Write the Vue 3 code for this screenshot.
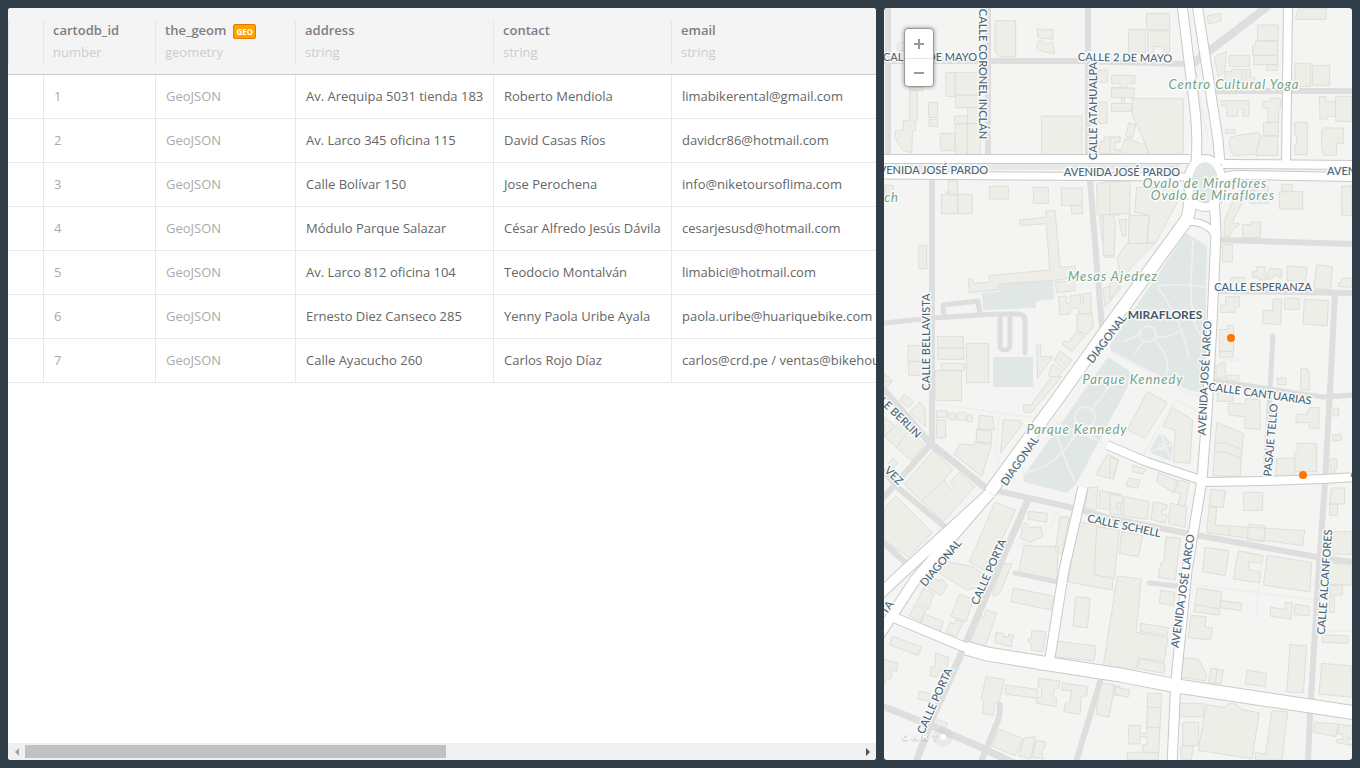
<template>
  <div class="workspace">
    <section class="panel table-panel">
      <div class="table-scroll">
        <table>
          <colgroup>
            <col class="col-handle">
            <col class="col-id">
            <col class="col-geom">
            <col class="col-address">
            <col class="col-contact">
            <col>
          </colgroup>
          <thead>
            <tr>
              <th><div class="head"></div></th>
              <th v-for="column in columns" :key="column.name">
                <div class="head">
                  <div class="name">
                    {{ column.name }}
                    <span v-if="column.geo" class="geo">GEO</span>
                  </div>
                  <div class="type">{{ column.type }}</div>
                </div>
              </th>
            </tr>
          </thead>
          <tbody>
            <tr v-for="row in rows" :key="row.id">
              <td></td>
              <td class="muted">{{ row.id }}</td>
              <td class="muted">GeoJSON</td>
              <td>{{ row.address }}</td>
              <td>{{ row.contact }}</td>
              <td>{{ row.email }}</td>
            </tr>
          </tbody>
        </table>
      </div>
      <div class="scrollbar">
        <button class="arrow" aria-label="Scroll left">
          <svg width="4" height="8" viewBox="0 0 4 8"><path d="M4 0V8L0 4Z" fill="#a3a3a3" /></svg>
        </button>
        <div class="track"><div class="thumb"></div></div>
        <button class="arrow" aria-label="Scroll right">
          <svg width="4" height="8" viewBox="0 0 4 8"><path d="M0 0V8L4 4Z" fill="#505050" /></svg>
        </button>
      </div>
    </section>

    <section class="panel map-panel">
      <svg class="map" viewBox="884 8 468 752" preserveAspectRatio="xMidYMid slice">
        <g class="park">
          <path d="M1186 233L1207 246L1204 392L1190 391L1111 351L1110 345Z" />
          <path d="M1108 357L1131 372L1128 386L1098 443L1076 484L1067 493L1024 482L1023 477Z" />
          <path d="M1160 432L1173 444L1171 461L1149 452Z" />
          <path d="M982 293L999 292V283L1053 281L1054 299L1036 301V308L983 310Z" />
          <path d="M993 357H1033V387H993Z" />
        </g>
        <g class="footpaths">
          <path v-for="d in footpaths" :key="d" :d="d" />
          <circle cx="1148" cy="334" r="8" />
          <circle cx="1085" cy="417" r="10" />
          <circle cx="1162" cy="447" r="3" />
        </g>
        <g
          v-for="tile in tiles"
          :key="tile.x + '-' + tile.y"
          class="buildings"
          :transform="`translate(${tile.x} ${tile.y}) scale(${1 / 3})`"
        >
          <path :d="tile.d" />
        </g>
        <g class="streets">
          <path v-for="s in streets" :key="s.d" :d="s.d" :stroke-width="s.w" />
        </g>
        <g class="casing">
          <path v-for="r in avenues" :key="r.d" :d="r.d" :stroke-width="r.w + 2" />
          <ellipse cx="1205" cy="183" rx="17" ry="24" stroke-width="10" />
        </g>
        <path d="M884 167H1180" stroke="#e4e9e7" stroke-width="5" />
        <g class="avenues">
          <path v-for="r in avenues" :key="r.d" :d="r.d" :stroke-width="r.w" />
          <ellipse cx="1205" cy="183" rx="17" ry="24" stroke-width="8" />
        </g>
        <ellipse class="island" cx="1205" cy="182" rx="13" ry="20" />
        <text
          v-for="(label, i) in labels"
          :key="i"
          :class="label.kind || 'street'"
          :text-anchor="label.anchor || 'middle'"
          dominant-baseline="central"
          dy="-1"
          :transform="`translate(${label.x} ${label.y}) rotate(${label.r || 0})`"
        >{{ label.text }}</text>
        <circle class="marker" cx="1231" cy="338" r="4" />
        <circle class="marker" cx="1303" cy="475" r="4" />
      </svg>

      <div class="zoom">
        <button aria-label="Zoom in">
          <svg width="10" height="10" viewBox="0 0 10 10"><path d="M5 0V10M0 5H10" stroke="#999" stroke-width="2" /></svg>
        </button>
        <button aria-label="Zoom out">
          <svg width="10" height="10" viewBox="0 0 10 10"><path d="M0 5H10" stroke="#999" stroke-width="2" /></svg>
        </button>
      </div>
      <a class="logo" href="#"><span>CART</span><i></i></a>
    </section>
  </div>
</template>

<script setup>
const columns = [
  { name: 'cartodb_id', type: 'number' },
  { name: 'the_geom', type: 'geometry', geo: true },
  { name: 'address', type: 'string' },
  { name: 'contact', type: 'string' },
  { name: 'email', type: 'string' }
]

const rows = [
  { id: 1, address: 'Av. Arequipa 5031 tienda 183', contact: 'Roberto Mendiola', email: 'limabikerental@gmail.com' },
  { id: 2, address: 'Av. Larco 345 oficina 115', contact: 'David Casas Ríos', email: 'davidcr86@hotmail.com' },
  { id: 3, address: 'Calle Bolívar 150', contact: 'Jose Perochena', email: 'info@niketoursoflima.com' },
  { id: 4, address: 'Módulo Parque Salazar', contact: 'César Alfredo Jesús Dávila', email: 'cesarjesusd@hotmail.com' },
  { id: 5, address: 'Av. Larco 812 oficina 104', contact: 'Teodocio Montalván', email: 'limabici@hotmail.com' },
  { id: 6, address: 'Ernesto Diez Canseco 285', contact: 'Yenny Paola Uribe Ayala', email: 'paola.uribe@huariquebike.com' },
  { id: 7, address: 'Calle Ayacucho 260', contact: 'Carlos Rojo Díaz', email: 'carlos@crd.pe / ventas@bikehouse' }
]

// building footprints, three units to a map pixel
const tiles = [
  {
    x: 880,
    y: 0,
    d: `M345 62H407V170H358L345 156Z M472 85L494 90L520 88L519 118L494 116L474 112Z M472 128L484 120L498 132L518 128L524 162L472 150Z
      M198 217h28v72h-28z M226 217h75v68h-75z M226 285h75v38h-75z M262 323h39v48h-39z M223 348h39v23h-39z M226 371h36v92h-36z
      M262 371h39v92h-39z M181 401h44v51h-44z M145 307h28v45h-28z M147 358h26v21h-26z
      M89 270h23v92h-6v30h-8l-3 66l-23-5q-20-20-26-42v-20h23l1-29h19z M90 262h40v10h-40z M62 127h20v25h-30v-18z
      M484 348h122v116h-122z M655 210h28v36h-28z M694 226h30v23h-30z M694 262h30v31h-30z M694 310h30v24h-30z M655 306h26v64h-26z
      M655 425h17v-14h48v15h-16v24h16v11h-60z M205 543h28v40h-28z M233 583h44v58h-44z M184 583h14v-8h8v10h27v56h-49z
      M328 559h57v38h-57z M460 562h45v48h-45z M544 564h63v52h-63z M575 616h33v26h-33z M650 553q10-8 70-8v100h-68z M14 556h26v30h-26z`
  },
  {
    x: 1110,
    y: 0,
    d: `M109 40h70v49h-70z M55 88h51v70h-51z M113 93h66v65h-17v-18h-32v18h-17z M290 48L330 40L335 63L296 72Z
      M442 75h62v48h-62z M437 122h66v44H428v-28h9z M433 166h70v28H430z M470 194h33v17h-33z M358 166h61v33h-61z
      M313 177L320 165L350 156L344 215L325 230Z M345 215h20v-7h56v24h13v10h-89z M395 208v30 M408 208v30
      M555 190h47v69h-47z M607 196h52v60h-52z M556 58L566 24H648V58Z M5 226h69v24h-24v14h-20v-14h-25z M5 264h67v29H5z
      M5 310h60v24H5z M34 293h10v17h-10z M67 296h153v167H120L67 345z M57 368L78 374L66 416L46 408Z
      M46 416L66 421L96 433L104 430L118 463H28Z M332 302h85v47h-18v-22h-16v22h-33v-32h-15z
      M481 295h31v28h-6v44h-32v-44h-16v-19h23z M460 367h45v40h-45z M346 388h28v12h-28z
      M358 418Q358 412 372 408L446 397L452 410L437 462L372 468Q356 450 358 418Z M452 408H503V466H437Z
      M628 290h20v14h28v45h-24v8h-22z M677 289h49v75h-49z M554 367h38v97h-38v-30h6v-30h-6z
      M635 388L640 384H700V430H680V466H640L634 440z M0 412h30v14h-16v24h16v12h-30z
      M508 575h70v52h-70z M515 553h32v22h-32z M695 558h31v88h-31z M420 560h55v50h-55z`
  },
  {
    x: 880,
    y: 190,
    d: `M418 90L499 82L498 62L525 62L540 233L586 228V262L522 272L355 282L354 300L268 307L265 266L277 266L280 280L328 277V257L509 240L499 101L420 107Z
      M116 166h24v70h-24z M525 278L585 272V302L530 308Z M659 78L700 80L702 202L677 202L675 165L668 160Z
      M535 320L558 318L560 340L573 338L569 318L600 314L603 332L600 340L612 340L606 312L632 310L634 370L598 372L594 355L572 355L570 372L540 374Z
      M590 374L636 370L640 410L620 434L592 420Z M592 422L614 438L575 485L546 462L556 452L564 458Z M540 482L575 510L552 540L522 512Z
      M517 523L548 545L525 570L505 555Z M470 466h12v34h36l-45 65z M669 295L720 278V300L675 350Z
      M172 439h78v35h-78z M174 474h78v34h-78z M184 520h70v22h-70z M165 542h80v90h-80z M259 460h67v117h-67z
      M84 466h45v48h-45z M86 514h40v43h-40z M12 550l26 23l-26 20z`
  },
  {
    x: 1110,
    y: 190,
    d: `M0-26h60v98H0z M80-8L205-8L205 30L138 157L110 157L118 76L74 66Z M57 76h62l-8 84h-56z M27 88L49 88L47 138L36 138Z
      M-20 74h30l6 28l-4 95h-32z M22 203L50 160H135L60 235L0 330V262L30 255Z
      M343 90L375 20H405L370 90V100H388V105L370 118L358 140H342Z M398 104h25v-8h29v47h-54z M337 164h30v52h-30z M405 0h28v30h-28z
      M428 262v-18h12v-14h26v40h-20v-8z M470 268L478 234L517 239L512 266L494 252L485 266Z M532 228L592 232L585 277L531 272Z
      M620 224L667 230L662 300L612 294Z M685 290v-12h10v-14h31v28z M358 278L366 262H404V275Z
      M332 345h15v-25h42v30h-14v17h-44z M490 327L515 327L512 404L457 400L460 362L487 362Z M524 325h44v33h-44z
      M583 328L655 332L652 407L579 402Z M328 418h25v-12h18v78h-43z M328 484h41v18h-41z M318 530Q325 518 346 518V564H318Z
      M350 556h36v16h-36z M572 535h20v10h6v55h-26z M502 564h26v20h-26z`
  },
  {
    x: 880,
    y: 380,
    d: `M58 62L73 42L100 66L86 83Z M88 96L120 66L135 85L136 140Z M14 170L60 125L134 195L94 243Z M48 205L82 160 M12 110L44 138L14 168Z
      M169 92h32v20h-32z M205 99h22v20h-22z M232 97h26v24h-26z M262 104h14v22h-14z M169 120h28v54h-28z
      M298 106L338 110L343 150L295 147Z M290 148L335 153V190L288 185Z M240 192L280 195L285 186L334 195L305 290L222 222Z
      M370 118L420 122L428 132L362 218Z M430 75h25l5-10L515-10H545L455 97H432Z
      M73 313L160 212L218 268L193 300L213 328L222 320L210 305L238 277L285 320L190 425Z M125 362L193 300
      M12 385L48 348L157 458L85 532L12 480Z M22 250L40 235L52 250L38 264Z M345 367L407 390L320 575L268 545Z
      M446 394L502 400L500 427L445 417Z M420 430L440 430L448 443L482 440L488 470L450 485L420 475L426 455Z
      M540 410L568 412L545 525L526 510Z M432 497L535 500L530 602L415 578Z M12 0l24 6l-24 20z
      M655 268L683 222L715 240L700 297L650 285Z M625 322h28l-4 66h-36z M659 332l34 6l30 4v50l-18-2l2-16l-14-4l-6 18l-32-4l4-20z
      M590 425L706 445L697 630L565 606Z`
  },
  {
    x: 1110,
    y: 380,
    d: `M52 150L112 35L172 68L120 150L105 175Z M160 140L187 82L248 120L240 250L190 245L196 150Z M322 40h46v24h-46z
      M355 70L405 72L408 55L450 60L450 148L405 145V110L357 105Z M320 127L400 160L390 290L308 287Z M312 188L350 190L394 208 M312 215L345 216L394 235
      M597 83L627 83V145L598 143V128H558V103H592Z M562 190h58v85h-66v-58h8z M500 235h54v55h-56z
      M670 84h16v24h-16z M668 165l24-3l3 18l-26 4z M661 236h20v30h-8v14h-12z M0 232L25 238L10 295H0Z M68 255L108 268L100 282L68 275Z
      M55 295L90 300L82 325L48 318Z M145 278L205 303L190 338L140 305Z M208 300l30 8l-14 70l-20-4l8-33l-22-5z
      M42 350L118 365L112 418L38 408Z M0 340l40 10l-4 20l-14-2l-2 18l14 4l-2 16l-32-5z M130 365L172 375L168 390L156 388L154 402L172 406L165 430L123 418Z
      M182 370L230 380L225 442L175 430Z M303 328L346 332L340 382L297 378Z M297 380L320 382L316 435L584 452L578 497L290 458Z
      M415 432L465 438L462 485L412 480Z M358 442V472 M400 337h58v54h-58z M664 324h40v48h-45z M659 372h24v34h-24z M664 455h62v68h-56z
      M285 502L357 512L345 587L278 575Z M385 512L460 527L455 550L415 545L418 570L450 575L448 608L370 597Z
      M472 526L605 548L600 636L460 615Z M35 455L98 465L85 530L28 520Z M-40 440l68 10l-15 145l-60-10z M168 470L212 475L205 520L196 600L145 592L152 550L162 545Z`
  },
  {
    x: 880,
    y: 570,
    d: `M35 198L124 230L115 257L30 225Z M12 268L54 280L50 305L34 300V325L18 330L12 345Z
      M167 250L206 262L200 310L180 300L170 322L150 318L155 290L165 292Z M118 363L155 373L150 395L112 387Z M172 448L202 460L196 474L166 465Z
      M130 55L162 72L145 118L108 100Z M103 105L137 120L125 155L88 138Z M130 130L190 155L180 188L120 165Z M238 72L280 88L258 155L213 140Z
      M210 158L222 162L228 150L250 155L230 200L198 188Z M165 25l15 10l4-10l18 22l-20 30l-40-25z M175 8L200-25L280-10L330 30L300 50L260 60Z
      M368-18h28L360 70Q350 80 337 75z M318 120L350 130L315 231L264 222L300 135L312 140Z
      M348 187L370 190L372 200L385 202L386 192L400 195L394 230L344 218Z M400 54L520 78L513 120L393 95Z
      M455 182L498 185L488 245L455 242L452 222L442 210L455 205Z M587 80L631 84L622 174L579 168Z M525 213L648 228L642 273L520 260Z
      M318 320L374 328L358 395L345 400L340 437L307 430L312 395L303 390Z M378 345L473 358L470 385L375 372Z
      M478 325L540 333L535 355L522 358L520 375L530 385L528 410L470 400V385L485 378V355L472 350Z
      M547 338L623 350L620 378L605 378L602 405L600 433L552 425L556 400L570 395L575 362L545 360Z
      M660 338L704 345L687 442L648 432Z M704 348h16v28h-16z M357 477L430 507L405 557L334 528Z M432 505L465 500V510L452 567L415 557Z
      M470 510L498 517L490 540L484 545L490 567L455 560Z`
  },
  {
    x: 1110,
    y: 570,
    d: `M22 18L94 27L78 187L173 203L163 275L84 263L77 303L-20 286Z M92 160L175 173L172 197L90 184Z M88 266L165 281L162 310L84 296Z
      M152 61L195 67L190 107L148 99Z M262 54L335 65L328 135L252 125L255 100Z M255 104L330 117 M332 91L395 100L392 122L330 113Z
      M242 136L288 140L285 170L307 173L302 210L235 203Z M220 264L265 267L290 315L285 332L213 322Z M303 295L340 300L333 342L295 336Z
      M322 298L316 340 M412 300L470 311L465 350L406 341Z M482 112L525 118L525 97L548 98L543 148L480 138Z M556 102L600 110L596 138L553 133Z
      M540 224L590 227L580 368L530 366Z M637 195L714 197V220L636 217Z M635 280L726 288V382L627 372Z M660 45h37v30h-37z M657 80h16v47h-16z
      M655-20h71v65h-66z M207 400H280V440H207Z M218 457h48v69h-48z M213 528h38l-8 42h-30z
      M288 404L342 412Q368 385 395 418L448 429L426 566L265 541Z M486 422L533 425L516 570H436V547L466 552Z
      M113 370h42l-10 200H52V547H98V524H110V500H90V522H55V466H90V490H110V470Z M113 412H153 M110 472H150 M98 547H146
      M17 352L59 360L55 381L14 374Z M614 457L686 462L678 500L612 487Z M686 464L726 466V510L716 502L714 514L726 526L680 518V508H697V492H684Z`
  }
]

const footpaths = [
  'M1193 240L1191 282Q1190 330 1206 340',
  'M1157 286Q1180 283 1206 287',
  'M1157 286Q1182 320 1189 358',
  'M1156 337Q1168 338 1180 331',
  'M1140 334L1124 342',
  'M1144 341L1134 354',
  'M1154 340Q1170 355 1167 374',
  'M1112 352L1190 394L1210 398',
  'M1055 422L1104 443',
  'M1023 473Q1060 468 1080 425',
  'M1054 425Q1060 450 1075 482',
  'M1092 410L1110 385',
  'M936 404L1050 420',
  'M1000 412Q994 450 998 460L1006 468',
  'M978 404V396',
  'M1142 457L1175 400L1199 412',
  'M1013 543Q1040 550 1058 512',
  'M1190 584L1316 600',
  'M1262 560L1256 618',
  'M1200 45L1196 80L1208 140',
  'M1149 452L1173 444M1160 432L1171 461',
  'M1220 360H1246',
  'M1330 631H1352'
]

const streets = [
  { d: 'M888 8V155', w: 6 },
  { d: 'M884 61H1080L1188 64', w: 6 },
  { d: 'M988 8V155', w: 6 },
  { d: 'M1088 8V155', w: 6 },
  { d: 'M1090 180L1102 328', w: 6 },
  { d: 'M932 180V443', w: 6 },
  { d: 'M884 323L933 318L997 314H1018Q1025 314 1025 321V353', w: 5 },
  { d: 'M944 315L943 305L978 301L980 314', w: 5 },
  { d: 'M1000 315V346Q1000 350 1005 350Q1010 350 1010 345V315', w: 5 },
  { d: 'M884 390L930 443L987 489', w: 7 },
  { d: 'M932 443L884 497', w: 6 },
  { d: 'M884 471L897 487L945 527', w: 6 },
  { d: 'M884 543L908 565', w: 6 },
  { d: 'M998 491L1073 508L1110 518L1190 534L1317 557L1352 562', w: 6 },
  { d: 'M1027 502L993 580L963 650L933 717L916 762', w: 7 },
  { d: 'M1015 573L1058 582', w: 5 },
  { d: 'M882 706L930 725L980 747L1014 763', w: 7 },
  { d: 'M1000 705Q1000 718 996 725L981 762', w: 6 },
  { d: 'M1100 682L1076 762', w: 6 },
  { d: 'M1268 6L1195 62', w: 8 },
  { d: 'M1213 91H1354', w: 6 },
  { d: 'M1220 240L1354 244', w: 6 },
  { d: 'M1217 291L1354 293', w: 6 },
  { d: 'M1335 293L1330 390L1325 483L1318 580L1311 698', w: 6 },
  { d: 'M1310 715L1308 762', w: 6 },
  { d: 'M1273 336L1270 390L1265 477', w: 5 },
  { d: 'M1215 381L1237 384L1323 397L1354 395', w: 5 },
  { d: 'M1149 583L1177 586', w: 5 }
]

const avenues = [
  { d: 'M880 159H1190', w: 8 },
  { d: 'M880 175L1186 177', w: 7 },
  { d: 'M1222 164L1356 165', w: 8 },
  { d: 'M1218 180Q1226 175 1240 175L1356 177', w: 8 },
  { d: 'M1182 4L1195 110Q1198 140 1196 162', w: 9 },
  { d: 'M1197 4L1218 140L1220 164', w: 9 },
  { d: 'M1288 4L1286 168', w: 8 },
  { d: 'M1190 200Q1190 215 1185 222L1110 325L1064 390L990 492', w: 12 },
  { d: 'M990 493L900 575L880 594', w: 10 },
  { d: 'M990 493L915 580L876 640', w: 10 },
  { d: 'M895 618L962 646L987 655', w: 9 },
  { d: 'M966 648L987 654L1043 663L1120 675L1177 686L1356 713', w: 13 },
  { d: 'M1083 487L1064 570L1049 664', w: 9 },
  { d: 'M1214 196L1216 233L1212 323L1207 413L1202 480L1187 570L1176 680L1172 764', w: 9 },
  { d: 'M1184 222Q1206 220 1214 234', w: 6 },
  { d: 'M1107 445L1147 462L1177 472L1207 482L1263 481L1323 479L1356 477', w: 8 }
]

const labels = [
  { text: 'CALLE 2 DE MAYO', x: 930, y: 57 },
  { text: 'CALLE 2 DE MAYO', x: 1125, y: 58, r: 1 },
  { text: 'CALLE CORONEL INCLÁN', x: 982, y: 74, r: 90 },
  { text: 'CALLE ATAHUALPA', x: 1093, y: 111, r: -90 },
  { text: 'AVENIDA JOSÉ PARDO', x: 930, y: 170 },
  { text: 'AVENIDA JOSÉ PARDO', x: 1122, y: 172 },
  { text: 'AVENIDA', x: 1327, y: 171, anchor: 'start' },
  { text: 'CALLE BELLAVISTA', x: 926, y: 342, r: -90 },
  { text: 'DIAGONAL', x: 1107, y: 339, r: -53 },
  { text: 'DIAGONAL', x: 1020, y: 461, r: -55 },
  { text: 'DIAGONAL', x: 941, y: 563, r: -50 },
  { text: 'AVENIDA JOSÉ LARCO', x: 1205, y: 378, r: -87 },
  { text: 'AVENIDA JOSÉ LARCO', x: 1183, y: 591, r: -82 },
  { text: 'CALLE ESPERANZA', x: 1263, y: 287 },
  { text: 'CALLE CANTUARIAS', x: 1260, y: 394, r: 8 },
  { text: 'PASAJE TELLO', x: 1271, y: 440, r: -85 },
  { text: 'CALLE SCHELL', x: 1124, y: 526, r: 12 },
  { text: 'CALLE PORTA', x: 989, y: 572, r: -66 },
  { text: 'CALLE PORTA', x: 935, y: 701, r: -66 },
  { text: 'CALLE ALCANFORES', x: 1325, y: 582, r: -86 },
  { text: 'LE BERLIN', x: 919, y: 436, r: 44, anchor: 'end' },
  { text: 'VEZ', x: 901, y: 483, r: 44, anchor: 'end' },
  { text: 'TA', x: 891, y: 602, r: -56, anchor: 'end' },
  { text: 'A', x: 1354, y: 473, r: -5 },
  { text: 'MIRAFLORES', x: 1165, y: 315, kind: 'district' },
  { text: 'Centro Cultural Yoga', x: 1234, y: 85, kind: 'place' },
  { text: 'Ovalo de Miraflores', x: 1205, y: 184, kind: 'place' },
  { text: 'Ovalo de Miraflores', x: 1213, y: 196, kind: 'place' },
  { text: 'ch', x: 899, y: 198, kind: 'place', anchor: 'end' },
  { text: 'Mesas Ajedrez', x: 1113, y: 277, kind: 'place' },
  { text: 'Parque Kennedy', x: 1133, y: 380, kind: 'place' },
  { text: 'Parque Kennedy', x: 1077, y: 430, kind: 'place' }
]
</script>

<style>
body {
  margin: 0;
  background: #303d47;
}
</style>

<style scoped>
.workspace {
  display: flex;
  gap: 8px;
  height: 100vh;
  padding: 8px;
  box-sizing: border-box;
  background: #303d47;
  font-family: "Open Sans", "Noto Sans", sans-serif;
  font-size: 13px;
  color: #666;
}

.panel {
  min-width: 0;
  overflow: hidden;
  border-radius: 3px;
}

.table-panel {
  flex: 868 1 0;
  display: flex;
  flex-direction: column;
  background: #fff;
}

.table-scroll {
  flex: 1;
  overflow: hidden;
}

table {
  width: 1720px;
  table-layout: fixed;
  border-collapse: separate;
  border-spacing: 0;
}

.col-handle {
  width: 35px;
}

.col-id {
  width: 112px;
}

.col-geom {
  width: 140px;
}

.col-address {
  width: 198px;
}

.col-contact {
  width: 178px;
}

th {
  padding: 13px 0 11px;
  text-align: left;
  background: #f4f4f4;
  border-bottom: 1px solid #ccc;
}

.head {
  height: 42px;
  padding-left: 9px;
  border-left: 1px solid #e5e5e5;
  line-height: 18px;
}

.name {
  display: flex;
  align-items: center;
  gap: 7px;
  margin-bottom: 4px;
  font-weight: 600;
  color: #7f7f7f;
}

.type {
  font-weight: 400;
  color: #ccc;
}

.geo {
  height: 13px;
  margin-top: 2px;
  padding: 0 2px;
  border: 1px solid #e07b00;
  border-radius: 2px;
  background: #ffa300;
  color: #fff;
  font-size: 8px;
  font-weight: 700;
  line-height: 14px;
}

td {
  height: 41px;
  padding: 0 10px 2px;
  border-left: 1px solid #e9e9e9;
  border-bottom: 1px solid #e9e9e9;
  white-space: nowrap;
}

td:first-child {
  border-left-color: transparent;
}

.muted {
  color: #aaa;
}

.scrollbar {
  display: flex;
  height: 17px;
  background: #f0f0f0;
}

.arrow {
  display: flex;
  align-items: center;
  justify-content: center;
  width: 17px;
  padding: 0;
  border: 0;
  background: none;
}

.track {
  flex: 1;
  padding: 2px 0;
}

.thumb {
  width: 50.5%;
  height: 13px;
  background: #c1c1c1;
}

.map-panel {
  position: relative;
  flex: 468 1 0;
  background: #f4f4f3;
}

.map {
  display: block;
  width: 100%;
  height: 100%;
}

.park,
.island {
  fill: #e0e7e5;
}

.footpaths {
  fill: none;
  stroke: #eeefee;
  stroke-width: 2;
}

.buildings {
  fill: #edeee7;
  stroke: #dededa;
  stroke-width: 3;
}

.streets {
  fill: none;
  stroke: #dedede;
  stroke-linecap: round;
  stroke-linejoin: round;
}

.casing {
  fill: none;
  stroke: #c9c9c9;
}

.avenues {
  fill: none;
  stroke: #fff;
  stroke-linejoin: round;
}

.street,
.district,
.place {
  paint-order: stroke;
  stroke: #fafafa;
  stroke-width: 3px;
  stroke-linejoin: round;
}

.street {
  font: 500 11px Lato, sans-serif;
  fill: #4b6676;
}

.district {
  font: 700 12px Lato, sans-serif;
  fill: #44586a;
}

.place {
  font: italic 13px Lato, sans-serif;
  letter-spacing: 1px;
  fill: #72a389;
}

.marker {
  fill: #ff7500;
}

.zoom {
  position: absolute;
  top: 20px;
  left: 20px;
  width: 28px;
  border: 1px solid #999;
  border-radius: 4px;
  background: #fff;
  box-shadow: 0 0 4px rgba(0, 0, 0, 0.4);
}

.zoom button {
  display: flex;
  align-items: center;
  justify-content: center;
  width: 28px;
  height: 29px;
  padding: 0;
  border: 0;
  background: none;
}

.zoom button + button {
  height: 28px;
  border-top: 1px solid #e5e5e5;
}

.logo {
  position: absolute;
  left: 18px;
  bottom: 13px;
  display: flex;
  align-items: center;
  color: #fff;
  font: 700 9px/20px "Open Sans", sans-serif;
  letter-spacing: 4px;
  text-decoration: none;
  text-shadow: 0 1px 2px rgba(0, 0, 0, 0.3);
}

.logo i {
  width: 6px;
  height: 6px;
  margin-left: -8px;
  border: 7px solid rgba(200, 200, 200, 0.25);
  border-radius: 50%;
  background: #fff;
  background-clip: padding-box;
}
</style>
